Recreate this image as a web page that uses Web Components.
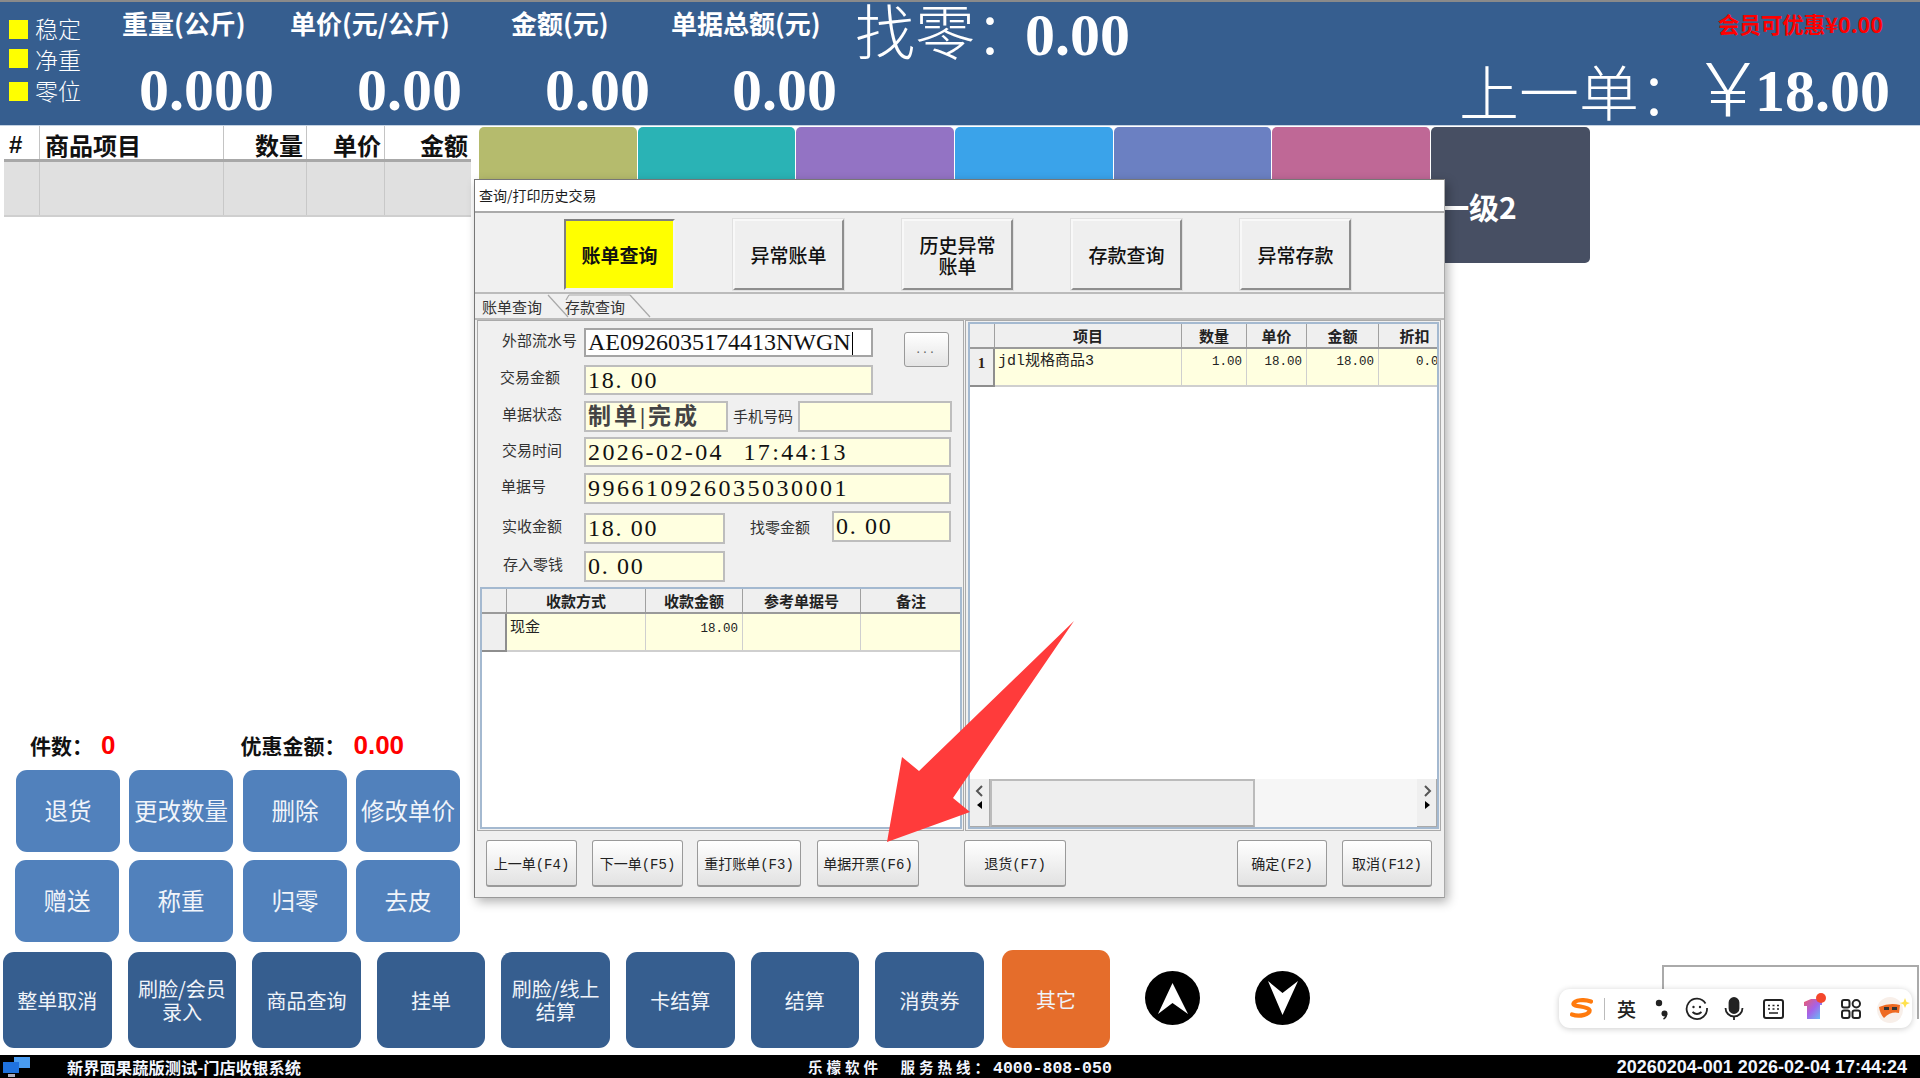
<!DOCTYPE html>
<html lang="zh">
<head>
<meta charset="utf-8">
<title>门店收银系统</title>
<style>
  html, body { margin: 0; padding: 0; background: #fff; }
  body { width: 1920px; height: 1078px; overflow: hidden; position: relative; display: flex; flex-direction: column; font-family: "Noto Sans CJK SC", sans-serif; }
</style>
</head>
<body>
<pos-header></pos-header>
<pos-main></pos-main>
<pos-footer></pos-footer>

<query-dialog>
  <pos-grid slot="pay" style="--pt:4px" cols="25 139 97 118 101" head="收款方式,收款金额,参考单据号,备注" row=",现金,18.00,," aligns="l,l,r,l,l"></pos-grid>
  <pos-grid slot="items" style="--pt:2px" cols="25 187 65 60 72 72" head="项目,数量,单价,金额,折扣" row="1,jdl规格商品3,1.00,18.00,18.00,0.00" aligns="c,l,r,r,r,r">
    <pos-scroll></pos-scroll>
  </pos-grid>
</query-dialog>

<red-arrow></red-arrow>
<side-box></side-box>
<ime-bar></ime-bar>

<script>
const CJK = '"Noto Sans CJK SC", sans-serif';

class PosHeader extends HTMLElement {
  connectedCallback() {
    this.attachShadow({ mode: 'open' });
    this.shadowRoot.innerHTML = `
      <style>
        :host { display: flex; height: 126px; box-sizing: border-box; background: #365e8f; color: #fff; border-top: 2px solid #8a8a8a; border-bottom: 1px solid #c4d2e2; font-family: ${CJK}; flex: none; }
        .status { width: 122px; padding: 17px 0 0 9px; box-sizing: border-box; display: flex; flex-direction: column; gap: 10px; font-size: 23px; font-weight: 300; line-height: 21px; }
        .status div { display: flex; align-items: center; gap: 7px; height: 21px; }
        .status i { width: 19px; height: 19px; background: #ff0; display: block; }
        .status span { margin-top: -3px; }
        .cols { display: grid; grid-template-columns: 168px 221px 160px 186px; }
        .col b { display: block; font-size: 26px; font-weight: 700; line-height: 30px; margin-top: 6px; white-space: nowrap; }
        .num { font: 700 60px/1 "Liberation Serif", serif; display: block; margin-top: 22px; }
        .right { flex: 1; display: flex; flex-direction: column; }
        .top { display: flex; justify-content: space-between; padding: 0 37px 0 0; height: 55px; }
        .change { font-size: 60px; font-weight: 300; line-height: 66px; white-space: nowrap; margin: -6px 0 0 -2px; }
        .big { font: 700 60px/66px "Liberation Serif", serif; margin-left: -10px; }
        .vip { color: #f00; font-size: 21.5px; font-weight: 700; line-height: 28px; margin-top: 8px; white-space: nowrap; }
        .prev { text-align: right; padding-right: 30px; font-size: 60px; font-weight: 300; line-height: 66px; white-space: nowrap; }
        .prev .big { margin-left: 0; vertical-align: 5px; }
        .yen { font-size: 74px; line-height: 0; margin: 0 -10px 0 -8px; }
      </style>
      <div class="status">
        <div><i></i><span>稳定</span></div>
        <div><i style="margin-top:-4px"></i><span>净重</span></div>
        <div><i></i><span>零位</span></div>
      </div>
      <div class="cols">
        <div class="col"><b>重量(公斤)</b><span class="num" style="padding-left:17px">0.000</span></div>
        <div class="col"><b>单价(元/公斤)</b><span class="num" style="padding-left:67px">0.00</span></div>
        <div class="col"><b>金额(元)</b><span class="num" style="padding-left:34px">0.00</span></div>
        <div class="col"><b>单据总额(元)</b><span class="num" style="padding-left:61px">0.00</span></div>
      </div>
      <div class="right">
        <div class="top">
          <div class="change">找零：<span class="big">0.00</span></div>
          <div class="vip">会员可优惠¥0.00</div>
        </div>
        <div class="prev">上一单：<span class="yen">￥</span><span class="big">18.00</span></div>
      </div>`;
  }
}

class PosMain extends HTMLElement {
  connectedCallback() {
    this.attachShadow({ mode: 'open' });
    this.shadowRoot.innerHTML = `
      <style>
        :host { display: flex; flex-direction: column; flex: 1; min-height: 0; }
        .top { display: flex; align-items: flex-start; padding-left: 4px; gap: 8px; }
        .fill { flex: 1; }
        .sum { display: flex; align-items: center; height: 30px; padding-left: 30px; font-size: 21px; font-weight: 700; color: #111; margin-bottom: 10px; }
        .sum b { color: #f00; font: 700 26px "Liberation Sans", sans-serif; margin-left: 8px; }
        .keys { display: grid; padding-left: 16px; grid-template-columns: 113px 114px 113px 104px; height: 82px; margin-bottom: 8px; }
        .keys + .keys { padding-left: 15px; grid-template-columns: 114px 114px 113px 104px; margin-bottom: 10px; }
        .actions { display: flex; align-items: flex-end; height: 96px; padding-left: 3px; gap: 16px; margin-bottom: 7px; }
        .nav { display: flex; align-self: center; margin-top: -4px; }
      </style>
      <div class="top">
        <goods-table></goods-table>
        <cat-tiles></cat-tiles>
      </div>
      <div class="fill"></div>
      <div class="sum">件数：<b>0</b><span style="margin-left:125px">优惠金额：</span><b>0.00</b></div>
      <div class="keys">
        <pos-key>退货</pos-key><pos-key>更改数量</pos-key><pos-key>删除</pos-key><pos-key>修改单价</pos-key>
      </div>
      <div class="keys">
        <pos-key>赠送</pos-key><pos-key>称重</pos-key><pos-key>归零</pos-key><pos-key>去皮</pos-key>
      </div>
      <div class="actions">
        <pos-key dark>整单取消</pos-key>
        <pos-key dark>刷脸/会员<br>录入</pos-key>
        <pos-key dark>商品查询</pos-key>
        <pos-key dark>挂单</pos-key>
        <pos-key dark>刷脸/线上<br>结算</pos-key>
        <pos-key dark>卡结算</pos-key>
        <pos-key dark>结算</pos-key>
        <pos-key dark>消费券</pos-key>
        <pos-key orange style="margin-left:2px">其它</pos-key>
        <pos-nav dir="up" class="nav" style="margin-left:19px"></pos-nav>
        <pos-nav dir="down" class="nav" style="margin-left:39px"></pos-nav>
      </div>`;
  }
}

class GoodsTable extends HTMLElement {
  connectedCallback() {
    this.attachShadow({ mode: 'open' });
    this.shadowRoot.innerHTML = `
      <style>
        :host { display: block; width: 467px; font-family: ${CJK}; flex: none; }
        .row { display: grid; grid-template-columns: 36px 184px 83px 78px 86px; }
        .head { height: 36px; box-sizing: border-box; border-bottom: 3px solid #a8a8a8; font-size: 24px; font-weight: 700; line-height: 38px; color: #111; }
        .head div { border-right: 1px solid #c4c4c4; padding: 0 3px 0 5px; white-space: nowrap; height: 33px; }
        .head div:last-child { border-right: 0; }
        .head .r { text-align: right; }
        .body { height: 55px; box-sizing: border-box; background: #e0e0e0; border-bottom: 2px solid #cfcfcf; }
        .body div { border-right: 1px solid #c8c8c8; }
        .body div:last-child { border-right: 0; }
      </style>
      <div class="row head">
        <div style="font-family:'Liberation Sans'">#</div><div>商品项目</div><div class="r">数量</div><div class="r">单价</div><div class="r">金额</div>
      </div>
      <div class="row body"><div></div><div></div><div></div><div></div><div></div></div>`;
  }
}

class CatTiles extends HTMLElement {
  connectedCallback() {
    this.attachShadow({ mode: 'open' });
    const colors = ['#b5bb6d', '#2ab3b5', '#9373c4', '#3aa3ea', '#6b80c2', '#bf6896'];
    this.shadowRoot.innerHTML = `
      <style>
        :host { display: flex; gap: 1px; padding-top: 1px; }
        div { width: 157.7px; height: 136px; border-radius: 5px; }
        .last { background: #474f63; color: #fff; font-size: 30px; font-weight: 700; display: flex; align-items: center; padding: 22px 0 0 8px; box-sizing: border-box; width: 159px; }
      </style>
      ${colors.map(c => `<div style="background:${c}"></div>`).join('')}
      <div class="last"><span>一级2</span></div>`;
  }
}

class PosKey extends HTMLElement {
  connectedCallback() {
    this.attachShadow({ mode: 'open' });
    const bg = this.hasAttribute('orange') ? '#e56d2b' : this.hasAttribute('dark') ? '#365e8f' : '#5181bc';
    const big = this.hasAttribute('dark') || this.hasAttribute('orange');
    this.shadowRoot.innerHTML = `
      <style>
        :host { display: flex; align-items: center; justify-content: center; text-align: center; box-sizing: border-box; background: ${bg}; color: #f0f4fa; border-radius: 11px; font-family: ${CJK}; font-size: ${big ? 20 : 23.5}px; line-height: 1.15; width: ${big ? 108.6 : 104}px; height: ${this.hasAttribute('orange') ? 98 : big ? 96 : 82}px; white-space: nowrap; flex: none; }
      </style>
      <slot></slot>`;
  }
}

class PosNav extends HTMLElement {
  connectedCallback() {
    this.attachShadow({ mode: 'open' });
    const up = this.getAttribute('dir') === 'up';
    const pts = up ? '27.5,12 43,43 27.5,32 13,43' : '13,10 27.5,22 43,10 27.5,44';
    this.shadowRoot.innerHTML = `
      <style>:host { display: block; width: 55px; height: 54px; flex: none; } svg { display: block; }</style>
      <svg width="55" height="54" viewBox="0 0 55 54"><ellipse cx="27.5" cy="27" rx="27.5" ry="27" fill="#000"/><polygon points="${pts}" fill="#fff"/></svg>`;
  }
}

class PosFooter extends HTMLElement {
  connectedCallback() {
    this.attachShadow({ mode: 'open' });
    this.shadowRoot.innerHTML = `
      <style>
        :host { display: grid; grid-template-columns: 808px 1fr auto; align-items: center; height: 23px; background: #000; color: #f2f6ff; flex: none; font-family: ${CJK}; overflow: hidden; }
        .left { display: flex; align-items: center; padding-left: 2px; font-size: 16.3px; font-weight: 700; }
        .left svg { margin-right: 37px; flex: none; }
        .mid { font-size: 14.5px; font-weight: 700; letter-spacing: 4px; white-space: nowrap; }
        .mid b { font: 700 16.5px "Liberation Mono", monospace; letter-spacing: 0; }
        .right { font: 700 18px "Liberation Sans", sans-serif; padding-right: 13px; white-space: nowrap; }
      </style>
      <div class="left">
        <svg width="28" height="23" viewBox="0 0 28 23">
          <rect x="12" y="1" width="16" height="11" fill="#4a9cf0"/>
          <rect x="1" y="6" width="16" height="11" fill="#1f72de"/>
          <rect x="6" y="18" width="7" height="3" fill="#aab"/>
        </svg>
        <span>新界面果蔬版测试-门店收银系统</span>
      </div>
      <div class="mid">乐檬软件　服务热线：<b>4000-808-050</b></div>
      <div class="right">20260204-001 2026-02-04 17:44:24</div>`;
  }
}

class QueryDialog extends HTMLElement {
  connectedCallback() {
    this.attachShadow({ mode: 'open' });
    this.shadowRoot.innerHTML = `
      <style>
        :host { position: absolute; left: 474px; top: 179px; width: 971px; height: 719px; box-sizing: border-box; border: 1px solid #777; border-right-color: #aaa; border-bottom-color: #999; background: #f0f0f0; box-shadow: 3px 4px 10px rgba(0,0,0,.3); display: flex; flex-direction: column; font-family: ${CJK}; color: #1c1c1c; }
        .title { height: 33px; box-sizing: border-box; background: #fff; border-bottom: 2px solid #aaa; font-size: 14px; line-height: 30px; padding-left: 4px; flex: none; }
        .tools { height: 81px; box-sizing: border-box; flex: none; border-bottom: 2px solid #bbb; padding: 6px 0 0 89px; display: flex; gap: 58px; }
        .tabs { height: 26px; box-sizing: border-box; flex: none; position: relative; border-bottom: 2px solid #bbb; font-size: 15px; line-height: 25px; color: #333; display: flex; }
        .tabs span { position: relative; }
        .tabs svg { position: absolute; left: 65px; top: 0; }
        .body { height: 511px; flex: none; display: flex; gap: 1px; padding-left: 2px; }
        .panel { border: 1px solid #aaa; box-sizing: border-box; display: flex; flex-direction: column; }
        .l { width: 487px; }
        .r { width: 476px; padding: 1px 1px 1px 2px; }
        .form { flex: none; display: flex; flex-direction: column; height: 266px; }
        .row { display: flex; flex: none; position: relative; }
        .more { position: absolute; left: 426px; top: 4px; width: 45px; height: 35px; box-sizing: border-box; border: 1px solid #999; border-radius: 3px; background: linear-gradient(#fff, #e4e4e4); font: 14px/30px "Liberation Sans", sans-serif; letter-spacing: 3px; text-align: center; color: #666; }
        ::slotted(pos-grid) { flex: 1; }
        .lg { flex: 1; display: flex; margin: 0 1px 1px 2px; min-height: 0; }
        .lg ::slotted(pos-grid) { flex: 1; }
        .foot { flex: 1; display: flex; padding: 9px 0 0 11px; align-items: flex-start; }
      </style>
      <div class="title">查询/打印历史交易</div>
      <div class="tools">
        <tool-btn active>账单查询</tool-btn>
        <tool-btn>异常账单</tool-btn>
        <tool-btn>历史异常<br>账单</tool-btn>
        <tool-btn>存款查询</tool-btn>
        <tool-btn>异常存款</tool-btn>
      </div>
      <div class="tabs">
        <span style="margin-left:7px">账单查询</span>
        <span style="margin-left:23px">存款查询</span>
        <svg width="120" height="25" viewBox="0 0 120 25" fill="none" stroke="#a8a8a8" stroke-width="1.2">
          <path d="M8 1 L28 23"/><path d="M26 6 L29 1"/><path d="M90 1 L110 23"/><path d="M29 1 H90"/>
        </svg>
      </div>
      <div class="body">
        <div class="panel l">
          <div class="form">
            <div class="row" style="margin-top:7px;height:29px">
              <pos-field label="外部流水号" pad="24" lw="106" w="289" focus style="--ls:0;--fs:24px;--lo:-6px">AE0926035174413NWGN</pos-field>
              <div class="more">...</div>
            </div>
            <div class="row" style="margin-top:8px;height:30px"><pos-field label="交易金额" pad="22" lw="106" w="289">18. 00</pos-field></div>
            <div class="row" style="margin-top:6px;height:31px">
              <pos-field label="单据状态" pad="24" lw="106" w="144" style="--fs:23px;--col:#444;--ls:3px;--fw:700">制单|完成</pos-field>
              <pos-field label="手机号码" pad="5" lw="70" w="154" style="--lo:-1px"></pos-field>
            </div>
            <div class="row" style="margin-top:5px;height:30px"><pos-field label="交易时间" pad="24" lw="106" w="367" style="--ls:2.4px;--ws:11px;--lo:-4px">2026-02-04 17:44:13</pos-field></div>
            <div class="row" style="margin-top:6px;height:31px"><pos-field label="单据号" pad="23" lw="106" w="367" style="--ls:2.5px">996610926035030001</pos-field></div>
            <div class="row" style="margin-top:9px;height:31px">
              <pos-field label="实收金额" pad="24" lw="106" w="141">18. 00</pos-field>
              <pos-field label="找零金额" pad="25" lw="107" w="119" style="margin-top:-2px;--lo:1px">0. 00</pos-field>
            </div>
            <div class="row" style="margin-top:7px;height:31px"><pos-field label="存入零钱" pad="25" lw="106" w="141">0. 00</pos-field></div>
          </div>
          <div class="lg"><slot name="pay"></slot></div>
        </div>
        <div class="panel r"><slot name="items"></slot></div>
      </div>
      <div class="foot">
        <dlg-btn style="width:91px">上一单(F4)</dlg-btn>
        <dlg-btn style="width:91px;margin-left:15px">下一单(F5)</dlg-btn>
        <dlg-btn style="width:104px;margin-left:14px">重打账单(F3)</dlg-btn>
        <dlg-btn style="width:102px;margin-left:16px">单据开票(F6)</dlg-btn>
        <dlg-btn style="width:102px;margin-left:45px">退货(F7)</dlg-btn>
        <dlg-btn style="width:90px;margin-left:171px">确定(F2)</dlg-btn>
        <dlg-btn style="width:90px;margin-left:15px">取消(F12)</dlg-btn>
      </div>`;
  }
}

class ToolBtn extends HTMLElement {
  connectedCallback() {
    this.attachShadow({ mode: 'open' });
    const on = this.hasAttribute('active');
    this.shadowRoot.innerHTML = `
      <style>
        :host { display: flex; align-items: center; justify-content: center; text-align: center; width: 111px; height: 71px; box-sizing: border-box; flex: none; font-family: ${CJK}; font-size: 19px; line-height: 21px; font-weight: ${on ? 700 : 500}; color: #111;
          background: ${on ? '#ff0' : '#efefef'};
          border: 2px solid; border-color: ${on ? '#808080 #f4f4f4 #f4f4f4 #808080' : '#f8f8f8 #8e8e8e #8e8e8e #f8f8f8'};
          ${on ? '' : 'box-shadow: 0 0 0 1px #e0e0e0;'} }
      </style>
      <slot></slot>`;
  }
}

class DlgBtn extends HTMLElement {
  connectedCallback() {
    this.attachShadow({ mode: 'open' });
    this.shadowRoot.innerHTML = `
      <style>
        :host { display: flex; align-items: center; justify-content: center; height: 47px; box-sizing: border-box; flex: none; border: 1px solid #9a9a9a; border-bottom-width: 2px; border-radius: 3px; background: linear-gradient(#fff, #e2e2e2); font: 14px "Liberation Mono", "Noto Sans CJK SC", monospace; color: #222; white-space: nowrap; }
      </style>
      <slot></slot>`;
  }
}

class PosField extends HTMLElement {
  connectedCallback() {
    this.attachShadow({ mode: 'open' });
    const a = n => this.getAttribute(n);
    const focus = this.hasAttribute('focus');
    this.shadowRoot.innerHTML = `
      <style>
        :host { display: flex; height: 100%; flex: none; font-family: ${CJK}; }
        label { width: ${a('lw')}px; box-sizing: border-box; padding-left: ${a('pad')}px; font-size: 15px; line-height: 24px; color: #333; white-space: nowrap; align-self: center; margin-top: var(--lo, -6px); flex: none; }
        .box { width: ${a('w')}px; height: 100%; box-sizing: border-box; padding: 1px 0 0 2px; border: 2px solid #bdbdbd; background: ${focus ? '#fff' : '#ffffe0'}; ${focus ? 'border-color:#a4a4a4;' : ''} font-family: "Liberation Serif", "Noto Sans CJK SC", serif; font-size: var(--fs, 24px); line-height: 1.05; font-weight: var(--fw, 400); letter-spacing: var(--ls, 1.7px); word-spacing: var(--ws, 0); color: var(--col, #111); white-space: nowrap; display: flex; align-items: center; overflow: hidden; }
        .caret { width: 1px; height: 23px; background: #000; margin-left: 1px; flex: none; }
      </style>
      <label>${a('label')}</label>
      <div class="box"><slot></slot>${focus ? '<span class="caret"></span>' : ''}</div>`;
  }
}

class PosGrid extends HTMLElement {
  connectedCallback() {
    this.attachShadow({ mode: 'open' });
    const cols = this.getAttribute('cols').split(' ');
    const tracks = cols.map(c => c + 'px').join(' ');
    const head = this.getAttribute('head').split(',');
    const row = this.getAttribute('row').split(',');
    const aligns = this.getAttribute('aligns').split(',');
    const cell = (t, i) => {
      if (aligns[i] === 'c') return `<div class="ind">${t}</div>`;
      if (i === 0) return `<div class="ind"></div>`;
      return aligns[i] === 'r' ? `<div class="c num">${t}</div>` : `<div class="c">${t}</div>`;
    };
    this.shadowRoot.innerHTML = `
      <style>
        :host { display: flex; flex-direction: column; box-sizing: border-box; border: 2px solid #a4b9d0; background: #fff; overflow: hidden; font-family: ${CJK}; min-width: 0; }
        .line { display: grid; grid-template-columns: ${tracks}; flex: none; }
        .head { height: 25px; box-sizing: border-box; border-bottom: 2px solid #9a9a9a; background: #efefef; }
        .head div { border-right: 1px solid #a0a0a0; text-align: center; font-size: 15px; font-weight: 700; line-height: 23px; color: #222; }
        .vals { height: 38px; box-sizing: border-box; background: #ffffe0; border-bottom: 2px solid #cfcfcf; }
        .c { border-right: 1.5px solid #cfcfcf; font: 15px/22px "Liberation Mono", "Noto Sans CJK SC", monospace; color: #222; padding: var(--pt, 3px) 3px 0; white-space: nowrap; }
        .num { text-align: right; font-size: 12.5px; padding-right: 4px; }
        .ind { background: #efefef; border-right: 2px solid #8e8e8e; font: 700 15px/29px "Liberation Serif", serif; text-align: center; color: #332211; margin-bottom: -2px; border-bottom: 2px solid #8e8e8e; }
        .fill { flex: 1; }
      </style>
      <div class="line head"><div></div>${head.map(h => `<div>${h}</div>`).join('')}</div>
      <div class="line vals">${row.map(cell).join('')}</div>
      <div class="fill"></div>
      <slot></slot>`;
  }
}

class PosScroll extends HTMLElement {
  connectedCallback() {
    this.attachShadow({ mode: 'open' });
    const btn = flip => `<div class="btn"><svg width="12" height="30" viewBox="0 0 12 30" style="${flip ? 'transform:scaleX(-1)' : ''}"><path d="M8 5 L3 10 L8 15" fill="none" stroke="#555" stroke-width="2"/><path d="M8 20 L3 24 L8 28 Z" fill="#000"/></svg></div>`;
    this.shadowRoot.innerHTML = `
      <style>
        :host { display: flex; height: 48px; flex: none; background: #f6f6f6; }
        .btn { width: 20px; background: #efefef; border-right: 1px solid #aaa; border-bottom: 1px solid #aaa; box-sizing: border-box; display: flex; justify-content: center; padding-top: 2px; flex: none; }
        .thumb { width: 265px; background: #eee; border: 2px solid #bbb; border-bottom-color: #aaa; border-top-color: #bbb; box-sizing: border-box; flex: none; }
        .track { flex: 1; }
      </style>
      ${btn(false)}<div class="thumb"></div><div class="track"></div>${btn(true)}`;
  }
}

class RedArrow extends HTMLElement {
  connectedCallback() {
    this.attachShadow({ mode: 'open' });
    this.shadowRoot.innerHTML = `
      <style>:host { position: absolute; left: 880px; top: 615px; width: 200px; height: 232px; } svg { display: block; }</style>
      <svg width="200" height="232" viewBox="880 615 200 232"><polygon points="1074,621 953,798 970,812 887,842 902,757 919,771" fill="#ff3b3b"/></svg>`;
  }
}

class SideBox extends HTMLElement {
  connectedCallback() {
    this.attachShadow({ mode: 'open' });
    this.shadowRoot.innerHTML = `<style>:host { position: absolute; left: 1662px; top: 965px; width: 257px; height: 54px; box-sizing: border-box; border: 2px solid #aaa; border-bottom: 0; }</style>`;
  }
}

class ImeBar extends HTMLElement {
  connectedCallback() {
    this.attachShadow({ mode: 'open' });
    this.shadowRoot.innerHTML = `
      <style>
        :host { position: absolute; left: 1559px; top: 989px; width: 353px; height: 39px; box-sizing: border-box; background: #fff; border-radius: 11px; box-shadow: 0 1px 6px rgba(0,0,0,.2); display: flex; align-items: center; padding-left: 11px; font-family: ${CJK}; color: #222; }
        svg { display: block; flex: none; }
        .sep { width: 1px; height: 22px; background: #bbb; margin: 0 12px 0 11px; flex: none; }
        .zh { font-size: 19px; font-weight: 500; line-height: 22px; width: 20px; flex: none; white-space: nowrap; }
      </style>
      <svg width="23" height="21" viewBox="0 0 23 21"><path d="M21 3.5 C14 1 5 2 3.5 5.5 C2.5 9 18 8 19.5 12 C20.5 16 10 19.5 2 16.5" fill="none" stroke="#ff7a0d" stroke-width="4.2" stroke-linecap="round"/></svg>
      <div class="sep"></div>
      <div class="zh">英</div>
      <svg style="margin-left:17px" width="14" height="22" viewBox="0 0 14 22"><circle cx="5" cy="5" r="3.2" fill="#222"/><circle cx="10.5" cy="15.5" r="3" fill="#222"/><path d="M12.5 16 Q12.5 19.5 9.5 21" fill="none" stroke="#222" stroke-width="1.6"/></svg>
      <svg style="margin-left:17px" width="24" height="24" viewBox="0 0 24 24" fill="none" stroke="#222" stroke-width="1.8"><path d="M20.5 6.5 A10.2 10.2 0 1 0 22 11"/><circle cx="8.5" cy="10" r="1.2" fill="#222" stroke="none"/><circle cx="15" cy="10" r="1.2" fill="#222" stroke="none"/><path d="M7.5 15 Q12 19 16.5 15"/></svg>
      <svg style="margin-left:15px" width="20" height="24" viewBox="0 0 20 24" fill="none" stroke="#222" stroke-width="1.8"><rect x="5.5" y="1" width="9" height="15" rx="4.5" fill="#222"/><path d="M1.5 11 A8.5 8.5 0 0 0 18.5 11"/><path d="M10 19.5 V23"/></svg>
      <svg style="margin-left:19px" width="21" height="20" viewBox="0 0 21 20" fill="none" stroke="#222" stroke-width="2"><rect x="1" y="1" width="19" height="18" rx="2"/><path d="M5 6.5 H7 M9.5 6.5 H11.5 M14 6.5 H16 M5 10 H7 M9.5 10 H11.5 M14 10 H16 M6 14 H15" stroke-width="1.6"/></svg>
      <svg style="margin-left:19px;margin-top:-4px" width="26" height="28" viewBox="0 0 26 28"><defs><linearGradient id="sh" x1="0" y1="0" x2="1" y2="1"><stop offset="0" stop-color="#ef5a6a"/><stop offset=".5" stop-color="#a463ea"/><stop offset="1" stop-color="#5fc8f5"/></linearGradient></defs><path d="M1 9 L8 6 H16 L19 9 V12 L17 12 V26 H4 V13 L1 13 Z" fill="url(#sh)"/><circle cx="18" cy="5" r="5" fill="#f4472b"/></svg>
      <svg style="margin-left:12px" width="20" height="20" viewBox="0 0 20 20" fill="none" stroke="#222" stroke-width="2"><rect x="1" y="1" width="7.5" height="7.5" rx="2"/><circle cx="15.3" cy="4.8" r="3.7"/><rect x="1" y="11.5" width="7.5" height="7.5" rx="2"/><rect x="11.5" y="11.5" width="7.5" height="7.5" rx="2"/></svg>
      <svg style="margin-left:15px" width="34" height="30" viewBox="0 0 34 30"><circle cx="14" cy="16" r="13" fill="#f8efe9"/><path d="M3 13 Q14 8 24 11 L23 19 Q15 17 8 24 Q4 20 3 13 Z" fill="#ee6a22"/><rect x="8" y="13" width="5" height="3" fill="#333"/><rect x="16" y="13" width="5" height="3" fill="#333"/><path d="M29 4 L30.5 8 L34 9 L30.5 10.5 L29 14 L27.5 10.5 L24 9 L27.5 8 Z" fill="#ffe14d"/></svg>`;
  }
}

customElements.define('pos-header', PosHeader);
customElements.define('pos-main', PosMain);
customElements.define('goods-table', GoodsTable);
customElements.define('cat-tiles', CatTiles);
customElements.define('pos-key', PosKey);
customElements.define('pos-nav', PosNav);
customElements.define('pos-footer', PosFooter);
customElements.define('query-dialog', QueryDialog);
customElements.define('tool-btn', ToolBtn);
customElements.define('dlg-btn', DlgBtn);
customElements.define('pos-field', PosField);
customElements.define('pos-grid', PosGrid);
customElements.define('pos-scroll', PosScroll);
customElements.define('red-arrow', RedArrow);
customElements.define('side-box', SideBox);
customElements.define('ime-bar', ImeBar);
</script>
</body>
</html>
